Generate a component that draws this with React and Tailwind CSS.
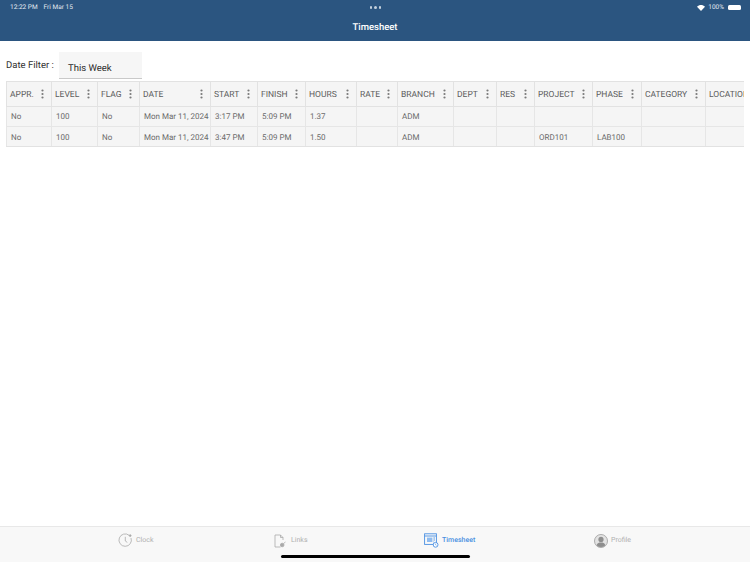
import React from 'react';

const columns = [
  { name: 'APPR.', width: 'w-[45px]' },
  { name: 'LEVEL', width: 'w-[46px]' },
  { name: 'FLAG', width: 'w-[42px]' },
  { name: 'DATE', width: 'w-[71px]' },
  { name: 'START', width: 'w-[47px]' },
  { name: 'FINISH', width: 'w-[48px]' },
  { name: 'HOURS', width: 'w-[51px]' },
  { name: 'RATE', width: 'w-[41px]' },
  { name: 'BRANCH', width: 'w-[56px]' },
  { name: 'DEPT', width: 'w-[43px]' },
  { name: 'RES', width: 'w-[38px]' },
  { name: 'PROJECT', width: 'w-[58px]' },
  { name: 'PHASE', width: 'w-[49px]' },
  { name: 'CATEGORY', width: 'w-[64px]' },
  { name: 'LOCATION', width: 'w-[39px]' },
];

const rows = [
  ['No', '100', 'No', 'Mon Mar 11, 2024', '3:17 PM', '5:09 PM', '1.37', '', 'ADM', '', '', '', '', '', ''],
  ['No', '100', 'No', 'Mon Mar 11, 2024', '3:47 PM', '5:09 PM', '1.50', '', 'ADM', '', '', 'ORD101', 'LAB100', '', ''],
];

function Kebab() {
  return (
    <svg width="3" height="10" viewBox="0 0 3 10" className="shrink-0" fill="#7a7a7a">
      <circle cx="1.5" cy="1.5" r="1.1" />
      <circle cx="1.5" cy="5" r="1.1" />
      <circle cx="1.5" cy="8.5" r="1.1" />
    </svg>
  );
}

function ClockIcon() {
  return (
    <svg width="15" height="15" viewBox="0 0 15 15" fill="none" stroke="#a9a9a9" strokeWidth="0.8">
      <path d="M11.2 2.4A6.2 6.2 0 1 0 13 5" />
      <path d="M7.3 3.8V8l2 1.4" />
      <circle cx="12.2" cy="2.6" r="0.9" fill="#a9a9a9" />
    </svg>
  );
}

function LinksIcon() {
  return (
    <svg width="14" height="14" viewBox="0 0 14 14" fill="none" stroke="#a9a9a9" strokeWidth="0.8">
      <path d="M6.5 13H1V1h5.5L9 3.5V6" />
      <path d="M6.5 1v2.5H9" />
      <circle cx="8.2" cy="11" r="1.8" fill="#a9a9a9" />
      <path d="M9.5 9.5l2-1.5" />
    </svg>
  );
}

function TimesheetIcon() {
  return (
    <svg width="15" height="15" viewBox="0 0 15 15" fill="none" stroke="#4a90e2" strokeWidth="0.9">
      <rect x="0.6" y="0.8" width="11.8" height="10.6" />
      <path d="M0.6 3H12.4" />
      <rect x="3" y="4.6" width="5.4" height="4.4" fill="#8fbcf0" stroke="none" />
      <path d="M9.4 5H11M9.4 7H11M9.4 9H10" />
      <circle cx="11.6" cy="11.8" r="2.4" fill="#ffffff" />
      <path d="M11.6 10.6v1.3l.8.5" strokeWidth="0.6" />
    </svg>
  );
}

function ProfileIcon() {
  return (
    <svg width="14" height="14" viewBox="0 0 14 14">
      <circle cx="7" cy="7" r="6.5" fill="#e3e3e3" stroke="#9a9a9a" strokeWidth="0.8" />
      <circle cx="7" cy="5.4" r="2.6" fill="#8e8e8e" />
      <path d="M2.6 11.2C3.4 9 5 8.6 7 8.6s3.6.4 4.4 2.6A6 6 0 0 1 2.6 11.2z" fill="#8e8e8e" />
    </svg>
  );
}

const tabs = [
  { label: 'Clock', icon: <ClockIcon />, place: 'w-[174px] pl-[18px]' },
  { label: 'Links', icon: <LinksIcon />, place: 'w-[150px]' },
  { label: 'Timesheet', icon: <TimesheetIcon />, place: 'w-[170px]', active: true },
  { label: 'Profile', icon: <ProfileIcon />, place: 'w-[150px]' },
];

export default function App() {
  return (
    <div className="flex h-[562px] w-[750px] flex-col overflow-hidden bg-white font-['Roboto',sans-serif] [text-rendering:geometricPrecision]">
      {/* Header */}
      <div className="h-[41px] bg-[#2b5580] text-white">
        <div className="flex h-[15px] items-center pl-[10px] pr-[9px] text-[6.5px] text-[#e4ebf2]">
          <div className="flex flex-1 gap-[6px]">
            <span>12:22 PM</span>
            <span>Fri Mar 15</span>
          </div>
          <div className="flex gap-[2px]">
            <span className="h-[2.5px] w-[2.5px] rounded-full bg-[#c3d0dd]"></span>
            <span className="h-[2.5px] w-[2.5px] rounded-full bg-[#c3d0dd]"></span>
            <span className="h-[2.5px] w-[2.5px] rounded-full bg-[#c3d0dd]"></span>
          </div>
          <div className="flex flex-1 items-center justify-end gap-[3px]">
            <svg width="8" height="6" viewBox="0 0 16 12" fill="#ffffff">
              <path d="M8 12L0 3.6C4.4-.9 11.6-.9 16 3.6z" />
            </svg>
            <span>100%</span>
            <span className="ml-[1px] h-[5px] w-[13px] rounded-[1.5px] bg-white"></span>
          </div>
        </div>
        <div className="mt-[3px] text-center text-[9.5px] font-medium leading-[20px]">Timesheet</div>
      </div>

      {/* Filter */}
      <div className="flex h-[40px] items-start pl-[6px] pt-[11px]">
        <span className="mt-[7px] w-[53px] text-[9.5px] leading-[14px] text-[#2f2f2f]">Date Filter :</span>
        <div className="h-[27px] w-[83px] border-b border-[#c9c9c9] bg-[#f6f6f6] pl-[9px] pt-[10px] text-[9.5px] leading-[14px] text-[#2a2a2a]">
          This Week
        </div>
      </div>

      {/* Table */}
      <div className="ml-[6px] flex w-[738px] flex-col overflow-hidden border-b border-t border-[#e2e2e2] bg-[#f5f5f5] text-[8px]">
        <div className="flex h-[25px] border-b border-[#e2e2e2] text-[8.5px] text-[#5c5c5c]">
          {columns.map((col) => (
            <div
              key={col.name}
              className={`${col.width} flex shrink-0 items-center justify-between overflow-hidden whitespace-nowrap border-l border-[#e2e2e2] pl-[3px] pr-[7px]`}
            >
              <span className="pt-[2px]">{col.name}</span>
              {col.name !== 'LOCATION' && <Kebab />}
            </div>
          ))}
        </div>
        {rows.map((row, i) => (
          <div key={i} className={`flex text-[#6a6a6a] ${i === 0 ? 'h-[20px] border-b border-[#e6e6e6]' : 'h-[19px]'}`}>
            {row.map((value, j) => (
              <div
                key={j}
                className={`${columns[j].width} flex shrink-0 items-center overflow-hidden whitespace-nowrap border-l border-[#e6e6e6] pl-[4px] ${i === 0 ? 'pt-[1px]' : 'pt-[2px]'}`}
              >
                {value}
              </div>
            ))}
          </div>
        ))}
      </div>

      <div className="flex-1"></div>

      {/* Tab bar */}
      <div className="relative h-[36px] border-t border-[#e8e8e8] bg-[#f8f8f8]">
        <div className="flex h-[27px] items-center pl-[100px]">
          {tabs.map((tab) => (
            <div key={tab.label} className={`${tab.place} flex shrink-0 items-center gap-[3px]`}>
              {tab.icon}
              <span className={`text-[7px] ${tab.active ? 'font-medium text-[#4a90e2]' : 'text-[#b0b0b0]'}`}>
                {tab.label}
              </span>
            </div>
          ))}
        </div>
        <div className="absolute bottom-[4px] left-[281px] h-[3px] w-[189px] rounded-full bg-black"></div>
      </div>
    </div>
  );
}
